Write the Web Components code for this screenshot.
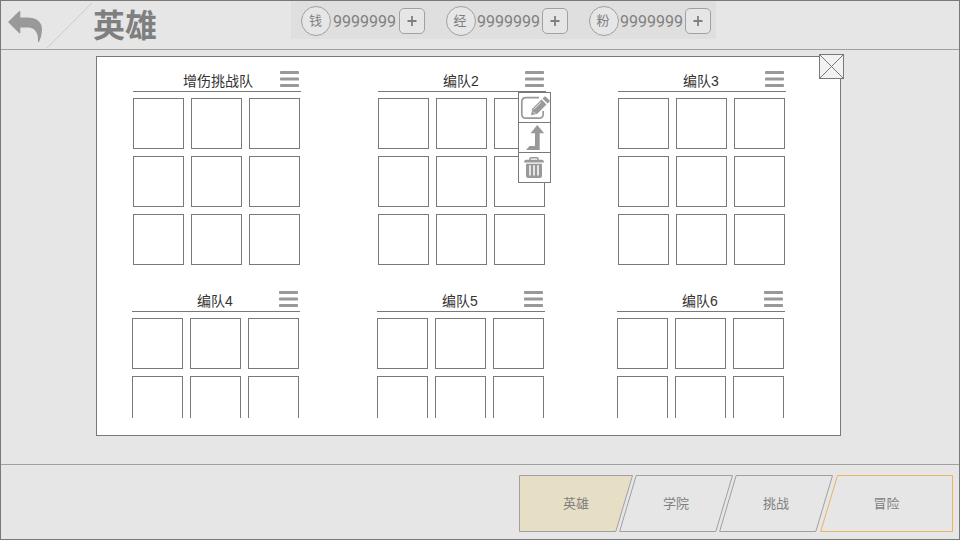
<!DOCTYPE html>
<html lang="zh-CN">
<head>
<meta charset="utf-8">
<title>英雄</title>
<style>
html,body{margin:0;padding:0;width:960px;height:540px;overflow:hidden}
body{font-family:"Liberation Sans","Noto Sans CJK SC",sans-serif}
</style>
</head>
<body>
<hero-screen></hero-screen>
<script>
function define(name, render) {
  customElements.define(name, class extends HTMLElement {
    connectedCallback() {
      if (this.shadowRoot) return;
      this.attachShadow({ mode: "open" }).innerHTML = render(this);
    }
  });
}

define("currency-item", el => `
<style>
:host{display:flex;align-items:center;height:30px;color:#7f7f7f}
.ring{box-sizing:border-box;width:30px;height:30px;padding-right:2px;border:1px solid #a0a0a0;border-radius:50%;background:#e6e6e6;font-size:13px;line-height:28px;text-align:center}
.num{box-sizing:border-box;width:var(--num-width,65px);height:30px;padding-top:1px;margin:0 0 0 1px;font:400 16px/30px Roboto,"Liberation Sans",sans-serif;white-space:nowrap}
.plus{display:block;flex:none}
</style>
<div class="ring">${el.getAttribute("label")}</div>
<div class="num"><slot></slot></div>
<svg class="plus" width="26" height="26"><rect x=".5" y=".5" width="25" height="25" rx="4.5" fill="#e6e6e6" stroke="#a0a0a0"/><path d="M8.5 13h9M13 8v10" stroke="#7f7f7f" stroke-width="1.8"/></svg>`);

define("top-bar", () => `
<style>
:host{display:flex;box-sizing:border-box;height:49px;border-bottom:1px solid #a0a0a0;color:#7f7f7f}
.back{display:block;flex:none}
h1{margin:0;width:198px;font:bold 32px/44px "Noto Sans CJK SC",sans-serif}
.bank{box-sizing:border-box;display:flex;gap:21px;width:425px;height:38px;padding:5px 0 0 10px;background:#dfdfdf}
currency-item:nth-child(1){--num-width:67px;text-indent:1px}
</style>
<svg class="back" width="92" height="48" viewBox="1 1 92 48"><path d="M8 22 19 11.2Q20.3 10.5 20.3 12V17.5H27Q42 17.5 42 30Q42 36 39 42H38Q38.5 28.5 29 27.5H20.3V32.5Q20.2 34 19 33Z" fill="#999"/><path d="M47 48 92 3" stroke="#ccc" fill="none"/></svg>
<h1>英雄</h1>
<div class="bank">
<currency-item label="钱">9999999</currency-item>
<currency-item label="经">9999999</currency-item>
<currency-item label="粉">9999999</currency-item>
</div>`);

define("team-menu", () => `
<style>
:host{box-sizing:border-box;display:grid;grid-template-rows:repeat(3,29px);gap:1px;width:33px;height:91px;border:1px solid #797979;background:#797979}
div{background:#fff}
svg{display:block}
</style>
<div><svg width="31" height="29" viewBox="519 93 31 29"><path d="M539 97.6H526Q521.8 97.6 521.8 102V114Q521.8 118.2 526 118.2H539Q543.2 118.2 543.2 114V111" fill="none" stroke="#999" stroke-width="1.7"/><path d="M531 115.2 532.3 108.7 541.5 99.5 546.5 104.5 537.3 113.7Z" fill="#999"/><path d="M542.5 98.5 544.2 96.8Q545.2 96.2 546.2 97L549.4 100.2Q550 101.2 549.4 102L547.6 103.6Z" fill="#999"/><path d="M534 109.2 541 102.2M533 111.5 535.2 113.7" stroke="#fff" stroke-width=".8"/></svg></div>
<div><svg width="31" height="29" viewBox="519 123 31 29"><path d="M537.3 125 544.2 133.2H539.7V150H526L529.5 146H535V133.2H530.5Z" fill="#999"/></svg></div>
<div><svg width="31" height="29" viewBox="519 153 31 29"><path d="M530 160V158.8Q530 157.8 531 157.8H537Q538 157.8 538 158.8V160" fill="none" stroke="#999" stroke-width="1.5"/><path d="M526 159.8H542Q544 159.8 544 162.5H524Q524 159.8 526 159.8Z" fill="#999"/><path d="M526 163.8H542V175.5Q542 178 539.5 178H528.5Q526 178 526 175.5Z" fill="#999"/><path d="M530 165.8V175M534 165.8V175M538 165.8V175" stroke="#fff" stroke-width="1.5" stroke-linecap="round"/></svg></div>`);

define("team-card", el => `
<style>
:host{display:block;position:relative;width:168px}
header{box-sizing:border-box;display:grid;grid-template-columns:19px 1fr 21px;height:23px;border-bottom:1px solid #797979}
.name{grid-column:2;color:#333;font-size:14px;line-height:22px;padding:1px 0 0 var(--name-shift,0);text-align:center;white-space:nowrap;height:20px}
.bars{display:block;margin-top:2px}
.slots{display:grid;grid-template-columns:repeat(3,51px);grid-auto-rows:51px;gap:7px;margin-top:6px}
.slots div{box-sizing:border-box;border:1px solid #797979;background:#fff}
team-menu{position:absolute;left:140px;top:23px}
</style>
<header><div class="name"><slot></slot></div><svg class="bars" width="19" height="17"><rect width="19" height="3" y="0" rx=".8" fill="#999"/><rect width="19" height="3" y="6.6" rx=".8" fill="#999"/><rect width="19" height="3" y="13" rx=".8" fill="#999"/></svg></header>
<div class="slots">${"<div></div>".repeat(9)}</div>
${el.hasAttribute("open") ? "<team-menu></team-menu>" : ""}`);

define("team-panel", () => `
<style>
:host{box-sizing:border-box;display:block;position:relative;width:745px;height:380px;border:1px solid #797979;background:#fff}
.view{height:361px;overflow:hidden}
.row{display:grid;grid-template-columns:245px 240px 168px;height:220px;padding:12px 0 0 36px;box-sizing:border-box}
.row + .row{padding-left:35px}
.wide-name{--name-shift:4px}
.close{position:absolute;left:722px;top:-3px;display:block}
</style>
<div class="view">
<div class="row"><team-card class="wide-name">增伤挑战队</team-card><team-card open>编队2</team-card><team-card>编队3</team-card></div>
<div class="row"><team-card>编队4</team-card><team-card>编队5</team-card><team-card>编队6</team-card></div>
</div>
<svg class="close" width="25" height="25"><rect x=".5" y=".5" width="24" height="24" fill="#f2f2f2" stroke="#797979"/><path d="M.5.5 24.5 24.5M24.5.5.5 24.5" stroke="#797979"/></svg>`);

define("nav-tab", el => {
  const w = +el.getAttribute("width");
  return `
<style>
:host{display:grid;width:${w}px;height:57px;color:#7f7f7f}
svg,.label{grid-area:1/1}
svg{display:block}
.label{font-size:13px;line-height:57px;text-align:center}
</style>
<svg width="${w}" height="57"><path d="${el.getAttribute("shape")}" fill="${el.getAttribute("fill") || "#e6e6e6"}" stroke="${el.getAttribute("stroke") || "#a0a0a0"}"/></svg>
<div class="label"><slot></slot></div>`;
});

define("bottom-bar", () => `
<style>
:host{box-sizing:border-box;display:flex;justify-content:flex-end;height:75px;padding:10px 6px 0 0;border-top:1px solid #a0a0a0}
nav-tab + nav-tab{margin-left:-14px}
nav-tab:last-child{margin-left:-13px}
</style>
<nav-tab width="114" shape="M.5.5H113.5L96.8 56.5H.5Z" fill="#e6dec5">英雄</nav-tab>
<nav-tab width="114" shape="M17.2.5H113.5L96.8 56.5H.6Z">学院</nav-tab>
<nav-tab width="114" shape="M17.2.5H113.5L96.8 56.5H.6Z">挑战</nav-tab>
<nav-tab width="133" shape="M17.5.5H132.5V56.5H.7Z" stroke="#e9b362">冒险</nav-tab>`);

define("hero-screen", () => `
<style>
:host{box-sizing:border-box;display:flex;flex-direction:column;width:960px;height:540px;border:1px solid #797979;background:#e6e6e6}
main{flex:1;padding:6px 0 0 95px}
</style>
<top-bar></top-bar>
<main><team-panel></team-panel></main>
<bottom-bar></bottom-bar>`);
</script>
</body>
</html>
